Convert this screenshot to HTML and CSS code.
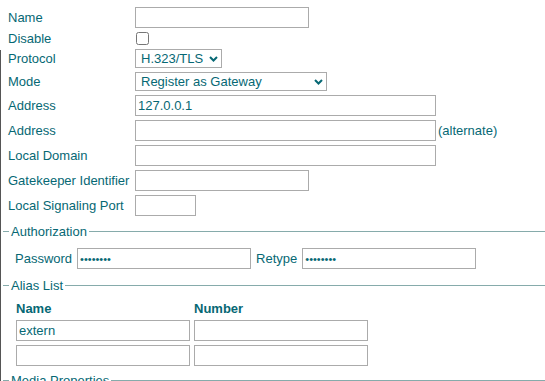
FILE: index.html
```html
<!DOCTYPE html>
<html lang="en">
<head>
    <meta charset="UTF-8">
    <meta name="viewport" content="width=device-width, initial-scale=1.0">
    <title>Gatekeeper Settings</title>
    <link rel="stylesheet" href="styles.css">
</head>
<body>
    <div class="page">
        <div class="settings">
            <div class="row row-tall">
                <label class="label" for="gk-name">Name</label>
                <input type="text" id="gk-name" class="field field-short">
            </div>
            <div class="row row-check">
                <label class="label" for="gk-disable">Disable</label>
                <input type="checkbox" id="gk-disable" class="check">
            </div>
            <div class="row row-select">
                <label class="label" for="gk-protocol">Protocol</label>
                <span class="select-wrap">
                    <select id="gk-protocol" class="select select-protocol">
                        <option>H.323/TLS</option>
                        <option>H.323</option>
                    </select>
                    <svg class="chevron" width="9" height="6" viewBox="0 0 9 6"><path d="M1 1l3.5 3.5L8 1" stroke="currentColor" stroke-width="2" fill="none"/></svg>
                </span>
            </div>
            <div class="row row-select">
                <label class="label" for="gk-mode">Mode</label>
                <span class="select-wrap">
                    <select id="gk-mode" class="select select-mode">
                        <option>Register as Gateway</option>
                        <option>Register as Endpoint</option>
                    </select>
                    <svg class="chevron" width="9" height="6" viewBox="0 0 9 6"><path d="M1 1l3.5 3.5L8 1" stroke="currentColor" stroke-width="2" fill="none"/></svg>
                </span>
            </div>
            <div class="row row-field">
                <label class="label" for="gk-address">Address</label>
                <input type="text" id="gk-address" class="field field-long" value="127.0.0.1">
            </div>
            <div class="row row-field">
                <label class="label" for="gk-address-alt">Address</label>
                <input type="text" id="gk-address-alt" class="field field-long">
                <span class="note">(alternate)</span>
            </div>
            <div class="row row-field">
                <label class="label" for="gk-domain">Local Domain</label>
                <input type="text" id="gk-domain" class="field field-long">
            </div>
            <div class="row row-field">
                <label class="label" for="gk-id">Gatekeeper Identifier</label>
                <input type="text" id="gk-id" class="field field-short">
            </div>
            <div class="row row-field">
                <label class="label" for="gk-port">Local Signaling Port</label>
                <input type="text" id="gk-port" class="field field-port">
            </div>
        </div>

        <fieldset class="group group-auth">
            <legend>Authorization</legend>
            <div class="auth-row">
                <label for="gk-pass">Password</label>
                <input type="password" id="gk-pass" class="field field-pass" value="12345678">
                <label for="gk-retype">Retype</label>
                <input type="password" id="gk-retype" class="field field-pass" value="12345678">
            </div>
        </fieldset>

        <fieldset class="group group-alias">
            <legend>Alias List</legend>
            <div class="alias-grid">
                <div class="alias-head">Name</div>
                <div class="alias-head">Number</div>
                <input type="text" class="field field-alias" value="extern">
                <input type="text" class="field field-alias">
                <input type="text" class="field field-alias">
                <input type="text" class="field field-alias">
            </div>
        </fieldset>

        <fieldset class="group group-media">
            <legend>Media Properties</legend>
        </fieldset>
    </div>
</body>
</html>
```
FILE: styles.css
```css
body {
    margin: 0;
    font-family: "Liberation Sans", Arial, sans-serif;
    font-size: 13px;
    color: #066874;
    background-color: #fff;
    overflow: hidden;
}

.page {
    position: relative;
    padding-top: 6px;
}

/* window edge on the left */
.page::before {
    content: "";
    position: absolute;
    left: 0;
    top: 50px;
    height: 400px;
    width: 1px;
    background-color: #555;
}

.settings {
    display: flex;
    flex-direction: column;
    gap: 2px;
    padding-left: 8px;
}

.row {
    display: flex;
    align-items: center;
}

.row-tall {
    height: 22px;
}

.row-check {
    height: 16px;
}

.row-select {
    height: 21px;
}

.row-field {
    height: 23px;
}

.label {
    width: 127px;
    flex-shrink: 0;
    white-space: nowrap;
}

.field {
    box-sizing: border-box;
    height: 21px;
    margin: 0;
    padding: 1px 2px;
    border: 1px solid #ababab;
    border-radius: 0;
    font-family: inherit;
    font-size: 13px;
    color: #066874;
    background-color: #fff;
}

.field-short {
    width: 174px;
}

.field-long {
    width: 301px;
}

.field-port {
    width: 61px;
}

.note {
    margin-left: 2px;
}

.check {
    width: 13px;
    height: 13px;
    margin: 0 0 0 1px;
}

.select-wrap {
    position: relative;
    display: inline-block;
    height: 19px;
}

.select {
    box-sizing: border-box;
    height: 19px;
    margin: 0;
    padding: 0 0 0 5px;
    border: 1px solid #ababab;
    border-radius: 0;
    -webkit-appearance: none;
    appearance: none;
    font-family: inherit;
    font-size: 13px;
    color: #066874;
    background-color: #fff;
}

.select-protocol {
    width: 87px;
}

.select-mode {
    width: 192px;
}

.chevron {
    position: absolute;
    right: 4px;
    top: 7px;
    pointer-events: none;
}

.group {
    margin: 0 0 0 3px;
    padding: 0 0 0 6px;
    border: 0;
    border-top: 1px solid #86abab;
    min-width: 0;
}

.group legend {
    padding: 0 2px;
    line-height: 15px;
}

.group-auth {
    margin-top: 7px;
}

.auth-row {
    display: flex;
    align-items: center;
    gap: 5px;
    padding: 8px 0 0 6px;
    height: 23px;
}

.field-pass {
    width: 174px;
    font-size: 11px;
}

.group-alias {
    margin-top: 8px;
}

.alias-grid {
    display: grid;
    grid-template-columns: 174px 174px;
    column-gap: 4px;
    row-gap: 4px;
    padding: 8px 0 0 7px;
}

.alias-head {
    font-weight: bold;
    height: 16px;
    line-height: 16px;
    margin-bottom: -1px;
}

.field-alias {
    width: 174px;
}

.group-media {
    margin-top: 7px;
}
```
